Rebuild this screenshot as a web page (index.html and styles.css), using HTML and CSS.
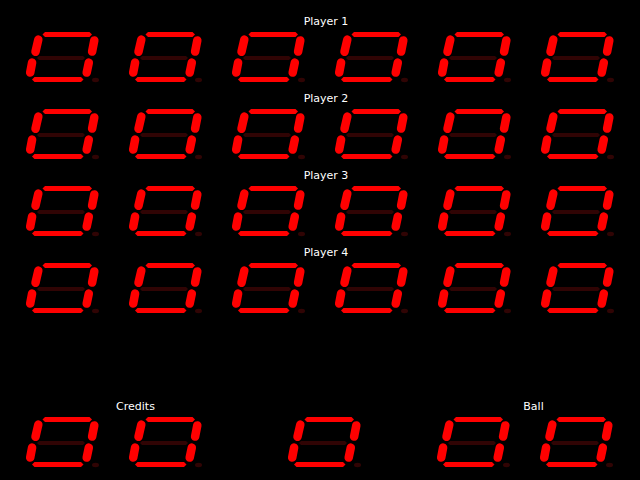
FILE: index.html
```html
<!DOCTYPE html>
<html lang="en">
<head>
  <meta charset="UTF-8">
  <title>Score Display</title>
  <link rel="stylesheet" href="styles.css">
</head>
<body>

  <!-- Seven segment digit, showing 0 (middle segment and dot unlit) -->
  <svg class="defs" width="0" height="0">
    <symbol id="digit" viewBox="0 0 80 52">
      <polygon class="seg" points="18.5,3.5 21,1 65.5,1 68,3.5 65.5,6 21,6"/>
      <line class="seg-v" x1="14.3" y1="8.6" x2="11.5" y2="20.8"/>
      <line class="seg-v" x1="70.3" y1="9.4" x2="68.1" y2="20.6"/>
      <polygon class="off" points="13,27 15,25 59,25 61,27 59,29 15,29"/>
      <line class="seg-v" x1="8.1" y1="31.6" x2="6.2" y2="41.6"/>
      <line class="seg-v" x1="64.8" y1="31.6" x2="62.7" y2="41.6"/>
      <polygon class="seg" points="8,48.5 10.5,46 57,46 59.5,48.5 57,51 10.5,51"/>
      <ellipse class="off" cx="71.5" cy="49" rx="3.5" ry="2.2"/>
    </symbol>
  </svg>

  <div class="board">
    <div class="player">
      <div class="label">Player 1</div>
      <div class="digits">
        <svg class="digit"><use href="#digit"/></svg>
        <svg class="digit"><use href="#digit"/></svg>
        <svg class="digit"><use href="#digit"/></svg>
        <svg class="digit"><use href="#digit"/></svg>
        <svg class="digit"><use href="#digit"/></svg>
        <svg class="digit"><use href="#digit"/></svg>
      </div>
    </div>
    <div class="player">
      <div class="label">Player 2</div>
      <div class="digits">
        <svg class="digit"><use href="#digit"/></svg>
        <svg class="digit"><use href="#digit"/></svg>
        <svg class="digit"><use href="#digit"/></svg>
        <svg class="digit"><use href="#digit"/></svg>
        <svg class="digit"><use href="#digit"/></svg>
        <svg class="digit"><use href="#digit"/></svg>
      </div>
    </div>
    <div class="player">
      <div class="label">Player 3</div>
      <div class="digits">
        <svg class="digit"><use href="#digit"/></svg>
        <svg class="digit"><use href="#digit"/></svg>
        <svg class="digit"><use href="#digit"/></svg>
        <svg class="digit"><use href="#digit"/></svg>
        <svg class="digit"><use href="#digit"/></svg>
        <svg class="digit"><use href="#digit"/></svg>
      </div>
    </div>
    <div class="player">
      <div class="label">Player 4</div>
      <div class="digits">
        <svg class="digit"><use href="#digit"/></svg>
        <svg class="digit"><use href="#digit"/></svg>
        <svg class="digit"><use href="#digit"/></svg>
        <svg class="digit"><use href="#digit"/></svg>
        <svg class="digit"><use href="#digit"/></svg>
        <svg class="digit"><use href="#digit"/></svg>
      </div>
    </div>

    <!-- Credits / match / ball -->
    <div class="status">
      <div class="group credits">
        <div class="label">Credits</div>
        <div class="digits">
          <svg class="digit"><use href="#digit"/></svg>
          <svg class="digit"><use href="#digit"/></svg>
        </div>
      </div>
      <div class="group match">
        <div class="digits">
          <svg class="digit"><use href="#digit"/></svg>
        </div>
      </div>
      <div class="group ball">
        <div class="label">Ball</div>
        <div class="digits">
          <svg class="digit"><use href="#digit"/></svg>
          <svg class="digit"><use href="#digit"/></svg>
        </div>
      </div>
    </div>
  </div>

</body>
</html>
```

FILE: styles.css
```css
* {
  margin: 0;
  padding: 0;
  box-sizing: border-box;
}

body {
  background-color: #000;
  color: #fff;
  font-family: "DejaVu Sans", Verdana, sans-serif;
  font-size: 11px;
  width: 640px;
  height: 480px;
  overflow: hidden;
}

.defs {
  position: absolute;
}

/* Segments */
.seg {
  fill: #ff0000;
}

.seg-v {
  stroke: #ff0000;
  stroke-width: 8.5;
  stroke-linecap: round;
}

.off {
  fill: #300404;
}

.digit {
  display: block;
  width: 80px;
  height: 52px;
}

/* Layout */
.board {
  padding-top: 12px;
}

.label {
  line-height: 19px;
  height: 19px;
  text-align: center;
}

.player {
  margin-bottom: 6px;
}

.player .label {
  padding-left: 12px;
}

.digits {
  display: flex;
  gap: 23px;
  padding-left: 24px;
}

.status {
  display: flex;
  align-items: flex-end;
  margin-top: 83px;
}

.group .digits {
  padding-left: 0;
}

.credits {
  margin-left: 24px;
}

.credits .label {
  padding-left: 40px;
}

.match {
  margin-left: 79px;
}

.ball {
  margin-left: 69px;
}

.ball .label {
  padding-left: 14px;
}
```
